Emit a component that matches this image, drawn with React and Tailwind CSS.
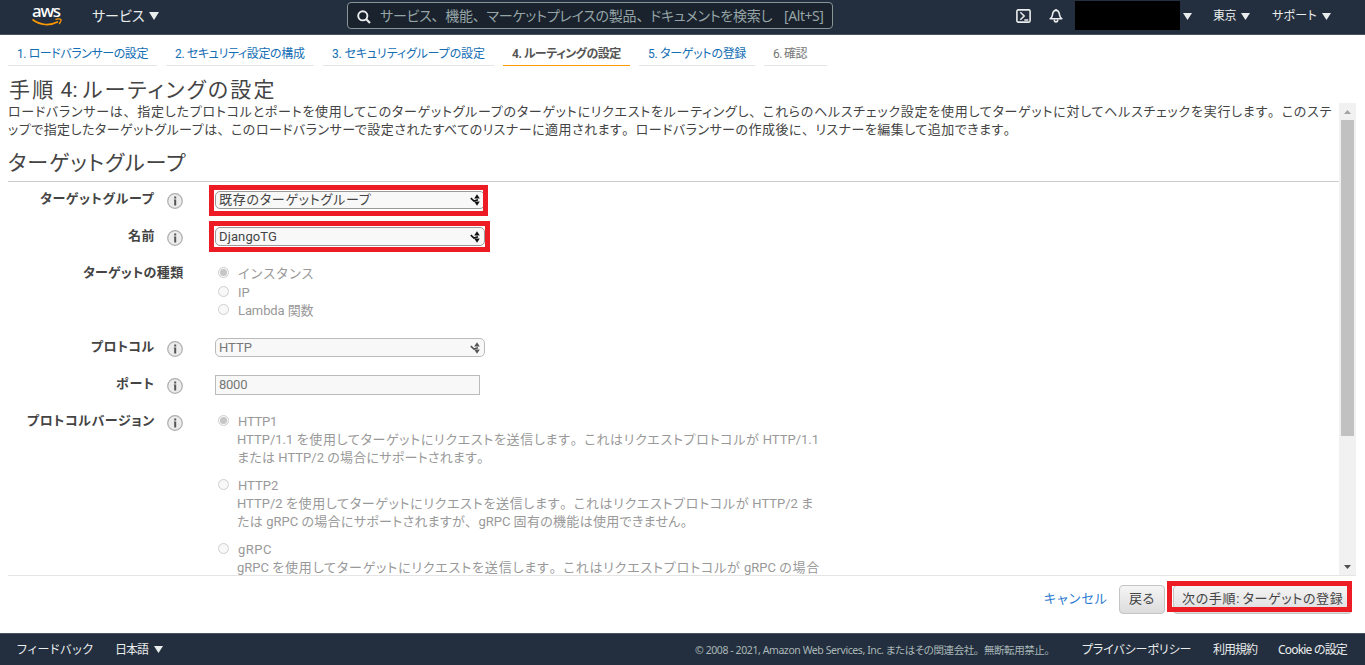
import React, { useLayoutEffect, useRef, useState } from "react";
import clsx from "clsx";

const steps = [
  { label: "1. ロードバランサーの設定", width: 131 },
  { label: "2. セキュリティ設定の構成", width: 130 },
  { label: "3. セキュリティグループの設定", width: 153 },
  { label: "4. ルーティングの設定", width: 109, state: "active" },
  { label: "5. ターゲットの登録", width: 98 },
  { label: "6. 確認", width: 34, state: "disabled" },
];

const versions = [
  {
    name: "HTTP1",
    width: 39,
    checked: true,
    lines: [
      ["HTTP/1.1 を使用してターゲットにリクエストを送信します。これはリクエストプロトコルが HTTP/1.1", 582],
      ["または HTTP/2 の場合にサポートされます。", 253],
    ],
  },
  {
    name: "HTTP2",
    width: 40,
    lines: [
      ["HTTP/2 を使用してターゲットにリクエストを送信します。これはリクエストプロトコルが HTTP/2 ま", 577],
      ["たは gRPC の場合にサポートされますが、gRPC 固有の機能は使用できません。", 457],
    ],
  },
  {
    name: "gRPC",
    width: 34,
    lines: [["gRPC を使用してターゲットにリクエストを送信します。これはリクエストプロトコルが gRPC の場合", 583]],
  },
];

// Single line of text, tracked so that it fills the given width.
// Kana are set proportionally, punctuation keeps its full width and
// latin words inside japanese text are never spread out.
const Fit = ({ width, className, children }) => {
  const ref = useRef(null);
  const [spacing, setSpacing] = useState(0);
  const japanese = children.replace(/[ -~©]/g, "").length;

  useLayoutEffect(() => {
    const gap = width - ref.current.offsetWidth;
    setSpacing(gap / (gap > 0 && japanese ? japanese : children.length));
  }, [width, children, japanese]);

  return (
    <span className={clsx("block shrink-0 whitespace-nowrap", className)} style={{ width }}>
      <span ref={ref} style={{ letterSpacing: spacing }}>
        {children.split(/([、。]|[ -~©]+)/).map((part, i) =>
          i % 2 ? (
            <span
              key={i}
              className={clsx(
                /[、。]/.test(part) && "[font-feature-settings:normal]",
                japanese > 0 && spacing > 0 && !/[、。]/.test(part) && "tracking-normal"
              )}
            >
              {part}
            </span>
          ) : (
            part
          )
        )}
      </span>
    </span>
  );
};

const Caret = ({ className = "w-[9px] h-[7px]" }) => (
  <svg viewBox="0 0 9 7" preserveAspectRatio="none" className={clsx("shrink-0", className)} fill="currentColor">
    <path d="M0 0h9L4.5 7z" />
  </svg>
);

const InfoIcon = () => (
  <svg viewBox="0 0 16 16" className="w-4 h-4 ml-3 mt-[10.5px] shrink-0">
    <circle cx="8" cy="8" r="7.3" fill="#ececec" stroke="#adadad" strokeWidth="1.2" />
    <path d="M7.2 3.6h2v1.9h-2zM6.8 6.5h2.4v5.9h-2V7.3h-.4z" fill="#555" />
  </svg>
);

const Radio = ({ checked }) => (
  <span className="w-[11px] h-[11px] mt-[2px] shrink-0 rounded-full border border-[#cfcfcf] bg-[#f8f8f8] flex items-center justify-center">
    {checked && <span className="w-[7px] h-[7px] rounded-full bg-[#c6c6c6]" />}
  </span>
);

const Option = ({ label, width, checked }) => (
  <div className="flex h-[18px] pl-[3px] text-[#999]">
    <Radio checked={checked} />
    <Fit width={width} className="ml-[9px]">{label}</Fit>
  </div>
);

const Select = ({ value, width, disabled, className }) => (
  <div
    className={clsx(
      "w-[270px] flex items-center justify-between rounded-[5px] border bg-[#f8f8f8] pl-[3px] pr-1",
      disabled ? "border-[#bbb] text-[#777]" : "border-[#999] text-[#444]",
      className
    )}
  >
    <Fit width={width}>{value}</Fit>
    <svg
      viewBox="0 0 10 12"
      className={clsx("w-[10px] h-3 shrink-0", disabled ? "text-[#555]" : "text-[#111]")}
      fill="currentColor"
    >
      <path d="M7 .3l2.8 4.2H4.2zM7 11.7L4.2 7.5h5.6z" />
      <path d="M.8 4.2L4 7.1l4-1.3" fill="none" stroke="currentColor" strokeWidth="1.7" />
    </svg>
  </div>
);

const Row = ({ label, width, info = true, className, children }) => (
  <div className={clsx("flex items-start", className)}>
    <div className={clsx("flex justify-end pt-2 font-bold text-[#444] shrink-0", info ? "w-[147px]" : "w-[176px]")}>
      <Fit width={width}>{label}</Fit>
    </div>
    {info && <InfoIcon />}
    <div className={clsx("relative", info ? "ml-8" : "ml-[31px]")}>{children}</div>
  </div>
);

const Header = () => (
  <header className="h-[35px] bg-[#232f3e] border-b border-[#4a5160] flex items-start text-sm text-[#eaeded] font-['Noto_Sans','Noto_Sans_CJK_JP',sans-serif]">
    <div className="w-[30px] ml-8 pt-[3px] shrink-0">
      <Fit width={28} className="text-[17px] leading-[16px] font-medium text-white">aws</Fit>
      <svg viewBox="0 0 30 8" className="w-[30px] h-2 -mt-px" fill="none" stroke="#f90">
        <path d="M.5 1.5C8 7.5 18 8 26 3.8" strokeWidth="1.7" />
        <path d="M23.5 1.4c2-.8 4.8-.7 5.3 0s-.4 3-1.7 4.6" strokeWidth="1.3" />
      </svg>
    </div>
    <div className="flex items-center h-[31px] ml-[30px]">
      <Fit width={52}>サービス</Fit>
      <Caret className="w-[10px] h-2 ml-[5px] mt-px" />
    </div>
    <div className="w-[486px] h-[27px] mt-[2px] ml-[188px] shrink-0 flex items-center rounded-sm border border-[#879596] bg-[#1a222d] text-[#95a5a6]">
      <svg viewBox="0 0 14 14" className="w-[14px] h-[14px] ml-[9px] mt-[3px] shrink-0" fill="none" stroke="#eaeded" strokeWidth="1.9">
        <circle cx="5.8" cy="5.8" r="4.6" />
        <path d="M9 9l4 4" strokeWidth="2.2" />
      </svg>
      <Fit width={392} className="ml-[9px]">サービス、機能、マーケットプレイスの製品、ドキュメントを検索し</Fit>
      <Fit width={40} className="ml-3">[Alt+S]</Fit>
    </div>
    <div className="flex items-center h-[31px] ml-[183px]">
      <svg viewBox="0 0 15 14" className="w-[15px] h-[14px]" fill="none" stroke="currentColor">
        <rect x=".9" y=".9" width="13.2" height="12.2" rx="1.3" strokeWidth="1.6" />
        <path d="M4.3 3.2L8.2 7l-3.9 3.8M8.3 11h4" strokeWidth="1.5" />
      </svg>
      <svg viewBox="0 0 14 14" className="w-[14px] h-[14px] ml-[18px]" fill="none" stroke="currentColor" strokeWidth="1.6">
        <path d="M1.2 9.7c2-1.2 2-2.6 2.3-4.2C3.9 3 5 1.4 7 1.4s3.1 1.6 3.5 4.1c.3 1.6.3 3 2.3 4.2z" strokeLinejoin="round" />
        <path d="M7 0v1M5.3 10.5c0 3.3 3.4 3.3 3.4 0" />
      </svg>
      <div className="w-[105px] h-[29px] ml-3 bg-black" />
      <Caret className="w-[9px] h-[7px] ml-[3px] mt-px" />
    </div>
    <div className="flex items-center h-[31px] ml-[21px] text-xs">
      <Fit width={23}>東京</Fit>
      <Caret className="w-[9px] h-[7px] ml-[5px] mt-px" />
    </div>
    <div className="flex items-center h-[31px] ml-[22px] text-xs">
      <Fit width={45}>サポート</Fit>
      <Caret className="w-[9px] h-[7px] ml-[5px] mt-px" />
    </div>
  </header>
);

const Steps = () => (
  <nav className="flex gap-[9px] h-[31px] pl-2 text-xs leading-[18px]">
    {steps.map(({ label, width, state }) => (
      <div
        key={label}
        className={clsx(
          "pl-[9px] pt-[10px] border-b",
          state === "disabled" ? "pr-5" : "pr-[9px]",
          state === "active" && "border-[#f90] font-bold text-[#555]",
          state === "disabled" && "border-[#e5e5e5] text-[#777]",
          !state && "border-[#e5e5e5] text-[#146eb4]"
        )}
      >
        <Fit width={width}>{label}</Fit>
      </div>
    ))}
  </nav>
);

const Scrollbar = () => (
  <div className="w-[17px] h-full shrink-0 bg-[#f1f1f1] flex flex-col items-center justify-between">
    <div className="w-full flex flex-col items-center">
      <div className="h-[17px] flex items-center">
        <Caret className="w-[7px] h-1 rotate-180 text-[#a3a3a3]" />
      </div>
      <div className="w-[13px] h-[316px] bg-[#c1c1c1]" />
    </div>
    <div className="h-[17px] flex items-center">
      <Caret className="w-[7px] h-1 text-[#505050]" />
    </div>
  </div>
);

const Form = () => (
  <div className="grow overflow-hidden leading-[18px]">
    <Fit width={1324}>
      ロードバランサーは、指定したプロトコルとポートを使用してこのターゲットグループのターゲットにリクエストをルーティングし、これらのヘルスチェック設定を使用してターゲットに対してヘルスチェックを実行します。このステ
    </Fit>
    <Fit width={1009}>
      ップで指定したターゲットグループは、このロードバランサーで設定されたすべてのリスナーに適用されます。ロードバランサーの作成後に、リスナーを編集して追加できます。
    </Fit>
    <div className="h-[43px] pt-[9px] border-b border-[#ccc] text-[21px] leading-[30px]">
      <Fit width={179}>ターゲットグループ</Fit>
    </div>

    <Row label="ターゲットグループ" width={115} className="h-[37px]">
      <Select value="既存のターゲットグループ" width={152} className="h-[18px] mt-[9px]" />
      <div className="absolute -left-1.5 top-[3px] w-[279px] h-[31px] border-5 border-[#ed1c24]" />
    </Row>
    <Row label="名前" width={27} className="h-[37px]">
      <Select value="DjangoTG" width={58} className="h-[19px] mt-2" />
      <div className="absolute -left-1.5 top-[2px] w-[281px] h-[31px] border-5 border-[#ed1c24]" />
    </Row>
    <Row label="ターゲットの種類" width={101} info={false} className="h-[74px]">
      <div className="flex flex-col gap-[0.5px] pt-[9px]">
        <Option label="インスタンス" width={77} checked />
        <Option label="IP" width={12} />
        <Option label="Lambda 関数" width={75} />
      </div>
    </Row>
    <Row label="プロトコル" width={64} className="h-[37px]">
      <Select value="HTTP" width={33} disabled className="h-[19px] mt-2" />
    </Row>
    <Row label="ポート" width={39} className="h-[37px]">
      <div className="w-[265px] h-5 mt-2 pl-[3px] border border-[#bbb] bg-[#f8f8f8] text-[#777]">
        <Fit width={28}>8000</Fit>
      </div>
    </Row>
    <Row label="プロトコルバージョン" width={128}>
      <div className="flex flex-col gap-2.5 pt-[9px]">
        {versions.map((version) => (
          <div key={version.name} className="text-[#999]">
            <Option label={version.name} width={version.width} checked={version.checked} />
            <div className="pl-[22px]">
              {version.lines.map(([text, width]) => (
                <Fit key={text} width={width}>{text}</Fit>
              ))}
            </div>
          </div>
        ))}
      </div>
    </Row>
  </div>
);

const Actions = () => (
  <div className="flex justify-end items-start h-[57px] pt-[9px] leading-[18px] text-[#444]">
    <Fit width={64} className="mt-[5px] text-[#2e7cd1]">キャンセル</Fit>
    <div className="w-[46px] h-[29px] ml-[11px] pl-[9px] pt-1 rounded-[4px] border border-[#c4c4c4] bg-linear-to-b from-[#f5f5f5] to-[#dcdcdc]">
      <Fit width={26}>戻る</Fit>
    </div>
    <div className="relative w-[179px] h-[29px] ml-2 mr-[13px] pl-2 pt-1 rounded-[4px] border border-[#c4c4c4] bg-linear-to-b from-[#f5f5f5] to-[#dcdcdc]">
      <Fit width={161}>次の手順: ターゲットの登録</Fit>
      <div className="absolute -left-[7px] -top-[5px] w-[185px] h-[31px] border-5 border-[#ed1c24]" />
    </div>
  </div>
);

const Footer = () => (
  <footer className="h-8 bg-[#232f3e] border-t border-[#4a5160] flex items-center justify-between pl-[17px] pr-[17px] text-xs leading-[18px] text-[#eaeded] font-['Noto_Sans','Noto_Sans_CJK_JP',sans-serif]">
    <div className="flex items-center">
      <Fit width={77}>フィードバック</Fit>
      <Fit width={33} className="ml-[21px]">日本語</Fit>
      <Caret className="w-[9px] h-[7px] ml-[6px]" />
    </div>
    <div className="flex items-center">
      <Fit width={360} className="text-[10.5px] text-[#aab7b8]">
        © 2008 - 2021, Amazon Web Services, Inc. またはその関連会社。無断転用禁止。
      </Fit>
      <Fit width={109} className="ml-[27px]">プライバシーポリシー</Fit>
      <Fit width={44} className="ml-[22px]">利用規約</Fit>
      <Fit width={69} className="ml-[21px] mr-px">Cookie の設定</Fit>
    </div>
  </footer>
);

const App = () => (
  <div
    lang="ja"
    className="h-screen overflow-hidden bg-white flex flex-col text-[13px] text-[#444] [font-feature-settings:'palt'] font-['Roboto','Noto_Sans_CJK_JP',sans-serif]"
  >
    <Header />
    <Steps />
    <h1 className="h-[37px] pt-[9px] pl-[9px] text-[21px] leading-[30px]">
      <Fit width={268}>手順 4: ルーティングの設定</Fit>
    </h1>
    <div className="h-[472px] ml-2 mr-[9px] flex">
      <Form />
      <Scrollbar />
    </div>
    <div className="h-px ml-2 mr-[9px] shrink-0 bg-[#e5e5e5]" />
    <Actions />
    <Footer />
  </div>
);

export default App;
